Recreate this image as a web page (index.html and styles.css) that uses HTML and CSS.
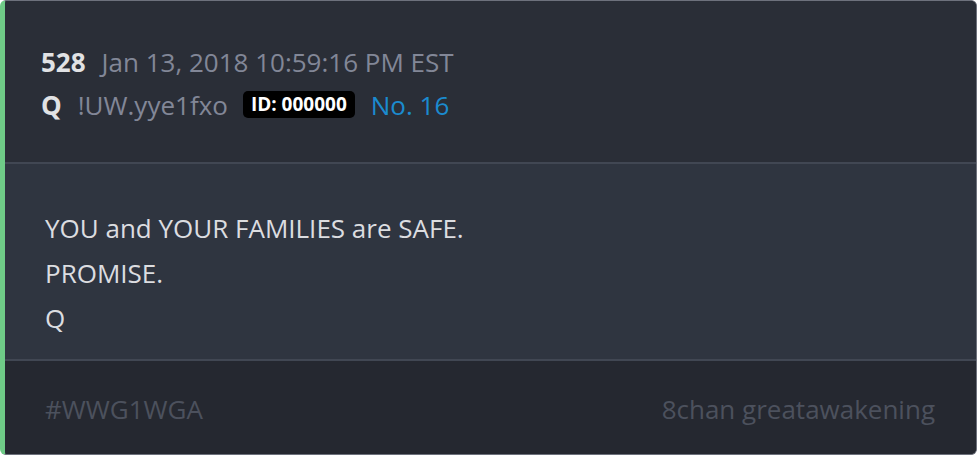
FILE: index.html
```html
<!DOCTYPE html>
<html lang="en">
  <head>
    <title>Q Drop 528</title>
    <link rel="stylesheet" href="styles.css">
  </head>
  <body>
    <article class="post">
      <!-- post header: number, date, author line -->
      <header class="post-head">
        <div class="head-line">
          <span class="post-num">528</span>
          <span class="post-date">Jan 13, 2018 10:59:16 PM EST</span>
        </div>
        <div class="head-line">
          <span class="post-author">Q</span>
          <span class="tripcode">!UW.yye1fxo</span>
          <span class="id-badge">ID: 000000</span>
          <span class="post-no">No. 16</span>
        </div>
      </header>
      <div class="post-body">
        <p>YOU and YOUR FAMILIES are SAFE.</p>
        <p>PROMISE.</p>
        <p>Q</p>
      </div>
      <footer class="post-foot">
        <span>#WWG1WGA</span>
        <span>8chan greatawakening</span>
      </footer>
    </article>
  </body>
</html>
```

FILE: styles.css
```css
body {
  margin: 0;
  background-color: #ffffff;
  font-family: "Open Sans", "DejaVu Sans", sans-serif;
}

.post {
  width: 971px;
  height: 453px;
  display: flex;
  flex-direction: column;
  border: 1px solid #6d717c;
  border-left: 5px solid #6fcb87;
  border-radius: 6px;
  overflow: hidden;
  background-color: #2a2e37;
}

.post-head {
  height: 163px;
  flex-shrink: 0;
  padding: 39px 0 0 36px;
  box-sizing: border-box;
  background-color: #2a2e37;
  border-bottom: 2px solid #414753;
}

.head-line {
  display: flex;
  align-items: center;
  height: 43px;
  font-size: 26px;
  color: #828797;
}

.post-num,
.post-author {
  font-weight: bold;
  color: #e1e2e4;
  margin-right: 16px;
}

.tripcode {
  margin-right: 15px;
}

.id-badge {
  height: 27px;
  line-height: 27px;
  background-color: #000000;
  color: #ffffff;
  font-size: 19px;
  font-weight: bold;
  padding: 0 8px;
  border-radius: 5px;
  margin-right: 16px;
}

.post-no {
  color: #1b8bcf;
}

.post-body {
  height: 197px;
  flex-shrink: 0;
  padding: 42px 0 0 40px;
  box-sizing: border-box;
  background-color: #2f3540;
  border-bottom: 2px solid #414753;
  color: #dcdde0;
  font-size: 26px;
}

.post-body p {
  margin: 0;
  line-height: 45px;
}

.post-foot {
  flex: 1;
  display: flex;
  justify-content: space-between;
  align-items: center;
  padding: 3px 41px 0 40px;
  background-color: #252830;
  color: #4c515d;
  font-size: 26px;
}
```
